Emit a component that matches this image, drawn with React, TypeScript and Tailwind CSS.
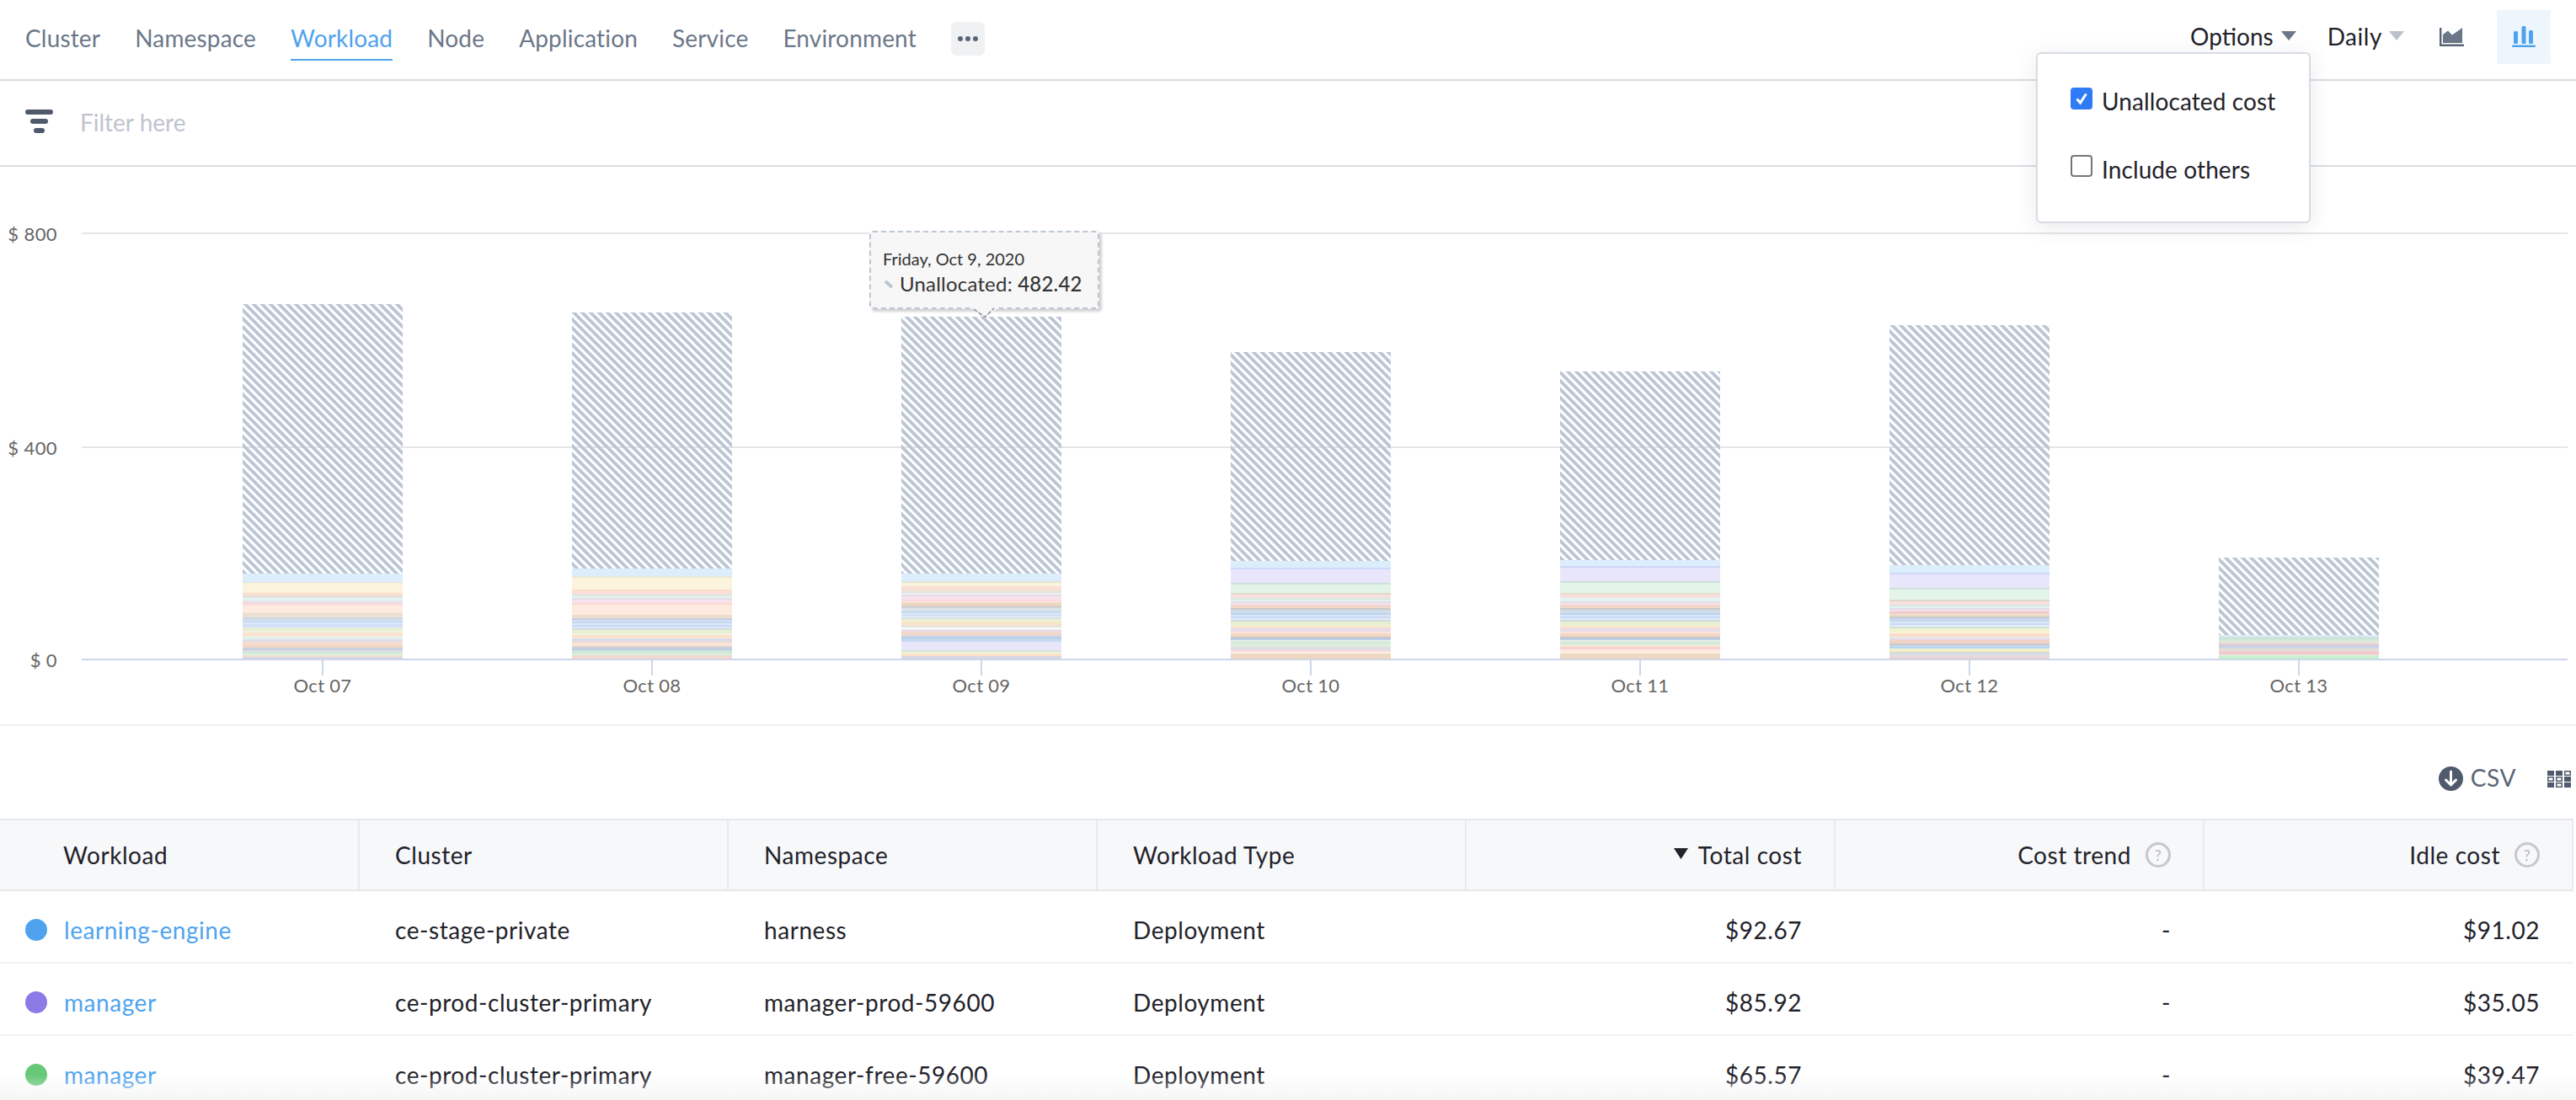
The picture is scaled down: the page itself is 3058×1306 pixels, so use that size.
import React from "react";

type S = [number, string];
const F = "[font-family:Lato,'Noto_Sans',sans-serif]";

const blue = "#dcedfb", lav = "#e8e6fb", grn = "#e3f5e8", cream = "#fcf3dc", peach = "#fdebdf";

const common45: S[] = [[4, "#d0dcea"], [2, "#b9d4f0"], [2, "#dce8f8"], [2, "#c8d8f8"], [2, "#e6ecf4"], [2, "#d0dce0"], [4, "#e6efcf"], [2, "#f2eed0"], [2, "#fae0d4"], [4, "#e8dce8"], [2, "#fbe4dc"], [4, "#f2d8c0"], [2, "#c8c4d0"], [2, "#b8cfe8"], [2, "#e8f0e8"], [2, "#cfe8d8"]];

const bars: { top: number; hatchEnd: number; stripes: S[] }[] = [
  { top: 361, hatchEnd: 681, stripes: [[10, blue], [1, "#dde2e0"], [12, cream], [4, "#f9dfd0"], [2, "#e0e0e0"], [4, "#e2f4f1"], [2, "#e6dce6"], [3, "#fcd8e0"], [9, peach], [2, "#eedcc8"], [4, "#e8e0d4"], [2, "#c9d4e4"], [2, "#d2e0f0"], [2, "#c6d8f0"], [2, "#dce8fc"], [2, "#c8daf6"], [2, "#d8e2f2"], [1, "#dfe4e0"], [3, "#e6efcf"], [2, "#eff0e0"], [3, "#fbe0c8"], [2, "#f7e6dc"], [3, "#dff0ec"], [3, "#dcdde8"], [4, "#f6dccc"], [3, "#efd5c4"], [3, "#c8cfe0"], [2, "#dbdde4"], [2, "#cfe8d8"], [2, "#dceedd"], [2, "#f5dfcc"], [2, "#d4d6e4"]] },
  { top: 371, hatchEnd: 675, stripes: [[9, blue], [2, "#e8e6d8"], [14, cream], [2, "#f9dcc8"], [4, "#f9e0dc"], [2, "#dde8e0"], [2, "#e2f4f1"], [2, "#e4dce8"], [4, "#f8e0ec"], [2, "#fad8d0"], [12, peach], [3, "#eedcc8"], [1, "#e8e0d4"], [2, "#c6cfe0"], [2, "#d4dff0"], [2, "#c8d8ee"], [2, "#dce8fc"], [2, "#c8daf6"], [2, "#dde6f5"], [2, "#d8dde0"], [4, "#e6efcf"], [2, "#f0f2e4"], [3, "#fbe0c8"], [1, "#f7e6dc"], [4, "#dcdde8"], [2, "#f9dccc"], [2, "#f8ece0"], [2, "#f2d8c4"], [2, "#c8d0e2"], [2, "#bccce2"], [4, "#cfe8d8"], [2, "#dceedd"], [4, "#f0d8d0"]] },
  { top: 376, hatchEnd: 681, stripes: [[9, blue], [2, "#dfe5dd"], [4, cream], [6, "#f9e0d4"], [2, "#d8e6dc"], [2, "#f0f0f0"], [2, "#e4dce8"], [4, "#f6e2ec"], [2, "#fcd8e0"], [2, "#f8e4d8"], [4, "#edd6c0"], [2, "#c9c9d0"], [4, "#dfe4ea"], [2, "#b9d8ee"], [2, "#dce8f6"], [2, "#cedcf8"], [2, "#e4e8f4"], [2, "#cfe4d8"], [2, "#f0f0d8"], [4, "#f5e6c8"], [2, "#f9dcc8"], [2, "#d9e6e0"], [2, "#ffffff"], [3, "#e6d8e4"], [4, "#f2d6c8"], [2, "#cfd4e0"], [3, "#b8cfe8"], [3, "#c8d8f0"], [10, lav], [2, "#cfe4d0"], [2, "#eef2d8"], [3, "#f9e2c8"], [3, "#d5d6e6"]] },
  { top: 418, hatchEnd: 666, stripes: [[8, blue], [2, "#cfd8f8"], [16, lav], [2, "#cfe0dc"], [10, grn], [2, "#e0d8c8"], [4, "#f9e0e0"], [2, "#d8e6e0"], [2, "#e2f4f1"], [2, "#e4dce8"], [2, "#f6e2ec"], [4, "#f2d8cc"], [2, "#c9c9c9"], ...common45, [4, "#dceedd"], [4, "#e0dde4"], [2, "#f9dcd8"], [2, "#fdf0e8"], [6, "#eed6c0"]] },
  { top: 441, hatchEnd: 665, stripes: [[7, blue], [2, "#cfd8f8"], [16, lav], [2, "#cfe0dc"], [12, grn], [2, "#e8dccc"], [4, "#f9e0e0"], [4, "#e2f4f1"], [2, "#e4dce8"], [2, "#f6e2ec"], [4, "#f2d8cc"], [2, "#c9c9c9"], ...common45, [2, "#dceedd"], [2, "#f0e8d0"], [3, "#f9cfd4"], [5, peach], [6, "#edd8c4"]] },
  { top: 386, hatchEnd: 671, stripes: [[9, blue], [2, "#cfd8f8"], [16, lav], [2, "#cfe0dc"], [12, grn], [2, "#e0d8c8"], [4, "#f9e0e0"], [2, "#d8e6e0"], [2, "#e2f4f1"], [2, "#e4dce8"], [2, "#f6e2ec"], [2, "#eec8cc"], [4, "#eddcc8"], [2, "#c9c9c9"], [4, "#c8d8ec"], [2, "#dce8f8"], [2, "#c8d8f8"], [2, "#e6ecf4"], [2, "#cfe4d8"], [4, "#f0f2d0"], [2, "#fdf3d0"], [4, "#f9dccc"], [2, "#e8eaea"], [2, "#e4d8e4"], [4, "#f2d2c4"], [2, "#c8c8d0"], [2, "#c8d8ea"], [2, "#b8d8f0"], [2, "#eef2d0"], [2, "#f5ecc0"], [2, "#d0dcd8"], [4, "#e0dde4"], [2, "#eccfd0"]] },
  { top: 662, hatchEnd: 754, stripes: [[2, blue], [4, "#cfe4d8"], [4, "#dde8dc"], [2, "#f5c8c8"], [4, "#c8cfe8"], [4, "#e0dcd8"], [4, "#f4c8c8"], [2, "#dbeedd"], [3, "#c4f0d0"]] },
];
const labels = ["Oct 07", "Oct 08", "Oct 09", "Oct 10", "Oct 11", "Oct 12", "Oct 13"];
const BASE = 782;

function Chart() {
  return (
    <svg width="3058" height="662" viewBox="0 198 3058 662" className="block shrink-0">
      <defs>
        <pattern id="hatch" patternUnits="userSpaceOnUse" width="10" height="10">
          <path d="M0 0L10 10M9 -1L11 1M-1 9L1 11" stroke="#bcc6d4" strokeWidth="4" fill="none" />
        </pattern>
      </defs>
      <rect x="97" y="276" width="2951" height="2" fill="#e6e6e6" />
      <rect x="97" y="530" width="2951" height="2" fill="#e6e6e6" />
      <rect x="97" y="782" width="2951" height="2" fill="#ccd6eb" />
      {[["$ 800", 286], ["$ 400", 540], ["$ 0", 792]].map(([t, y]) => (
        <text key={t as string} x="68" y={y as number} textAnchor="end" fontSize="22" fill="#666666" fontFamily="Lato, sans-serif" letterSpacing="0.4">{t}</text>
      ))}
      {bars.map((b, i) => {
        const x = 288 + i * 391;
        const total = b.stripes.reduce((a, s) => a + s[0], 0);
        const k = (BASE - b.hatchEnd) / total;
        let y = b.hatchEnd;
        return (
          <g key={i}>
            <rect x={x} y={b.top} width="190" height={b.hatchEnd - b.top} fill="url(#hatch)" />
            {b.stripes.map((s, j) => {
              const h = s[0] * k;
              const r = <rect key={j} x={x} y={y} width="190" height={h + 0.3} fill={s[1]} />;
              y += h;
              return r;
            })}
            <rect x={x + 94} y="784" width="2" height="18" fill="#ccd6eb" />
            <text x={x + 95} y="822" textAnchor="middle" fontSize="22" fill="#666666" fontFamily="Lato, sans-serif" letterSpacing="0.3">{labels[i]}</text>
          </g>
        );
      })}
    </svg>
  );
}

function Help() {
  return (
    <span className="ml-[17px] flex h-[30px] w-[30px] items-center justify-center rounded-full border-[3px] border-[#c6c8cc] text-[17px] leading-none text-[#b4b6bb]">?</span>
  );
}

function Th({ children, right, first }: { children: React.ReactNode; right?: boolean; first?: boolean }) {
  return (
    <div className={`flex items-center border-r-2 border-[#e9eaed] bg-[#f7f8fa] ${right ? "justify-end pr-[38px]" : first ? "pl-[75px]" : "pl-[42px]"}`}>
      {children}
    </div>
  );
}

const rows = [
  { dot: "#4fa3ee", name: "learning-engine", cl: "ce-stage-private", ns: "harness", total: "$92.67", idle: "$91.02" },
  { dot: "#8c7be6", name: "manager", cl: "ce-prod-cluster-primary", ns: "manager-prod-59600", total: "$85.92", idle: "$35.05" },
  { dot: "#66c878", name: "manager", cl: "ce-prod-cluster-primary", ns: "manager-free-59600", total: "$65.57", idle: "$39.47" },
];

const Cell = ({ children, right }: { children: React.ReactNode; right?: boolean }) => (
  <div className={`flex h-[86px] items-center border-b-2 border-[#f1f2f4] pt-[8px] ${right ? "justify-end pr-[40px]" : "pl-[42px]"}`}>{children}</div>
);

export default function App() {
  return (
    <div className={`relative flex h-[1306px] w-[3058px] flex-col overflow-hidden bg-white text-[28px] tracking-[0.55px] text-[#22222a] ${F}`}>
      <header className="flex h-[96px] shrink-0 border-b-2 border-[#d8dce0] pl-[30px] pr-[30px]">
        <nav className="flex items-start gap-[41px] tracking-[0.17px] text-[#6b7789]">
          {["Cluster", "Namespace", "Workload", "Node", "Application", "Service", "Environment"].map((t) => (
            <span key={t} className={`mt-[26px] flex h-[46px] items-start leading-[38px] ${t === "Workload" ? "border-b-2 border-[#4fa3ee] text-[#4fa3ee]" : ""}`}>{t}</span>
          ))}
          <span className="mt-[26px] flex h-[40px] w-[40px] items-center justify-center gap-[3px] rounded-[6px] bg-[#f0f1f3]">
            <i className="h-[6px] w-[6px] rounded-full bg-[#5a6577]" />
            <i className="h-[6px] w-[6px] rounded-full bg-[#5a6577]" />
            <i className="h-[6px] w-[6px] rounded-full bg-[#5a6577]" />
          </span>
        </nav>
        <div className="ml-auto flex items-start">
          <span className="mt-[24px] leading-[38px] tracking-normal">Options</span>
          <svg width="18" height="11" className="ml-[9px] mt-[37px]"><path d="M0 0H18L9 11Z" fill="#6b7789" /></svg>
          <span className="ml-[37px] mt-[24px] leading-[38px]">Daily</span>
          <svg width="18" height="11" className="ml-[8px] mt-[37px]"><path d="M0 0H18L9 11Z" fill="#bcc2cc" /></svg>
          <svg width="29" height="22" viewBox="0 0 29 22" className="ml-[42px] mt-[33px]">
            <path d="M1.2 0V20.8H29" stroke="#5a6577" strokeWidth="2.4" fill="none" />
            <path d="M4 18V8L10 3.5L15 8.5L27 0V18Z" fill="#6b7789" />
          </svg>
          <span className="ml-[39px] mt-[12px] flex h-[64px] w-[64px] items-start justify-center bg-[#eef6fd]">
            <svg width="28" height="25" viewBox="0 0 28 25" className="mt-[19px]">
              <rect x="2" y="6" width="5" height="15" rx="1.5" fill="#4fa3ee" />
              <rect x="11.5" y="0" width="5" height="21" rx="1.5" fill="#4fa3ee" />
              <rect x="20" y="5" width="5" height="16" rx="1.5" fill="#4fa3ee" />
              <rect x="0" y="22.5" width="28" height="2.5" rx="1" fill="#4fa3ee" />
            </svg>
          </span>
        </div>
      </header>

      <div className="flex h-[102px] shrink-0 items-center border-b-2 border-[#d8dce0] pl-[30px]">
        <svg width="33" height="28" viewBox="0 0 33 28" className="mt-[-4px]">
          <rect x="0" y="0" width="33" height="6" rx="3" fill="#505a6c" />
          <rect x="6" y="11" width="21" height="6" rx="3" fill="#505a6c" />
          <rect x="10" y="22" width="13" height="6" rx="3" fill="#505a6c" />
        </svg>
        <span className="ml-[32px] mt-[-2px] tracking-normal text-[#c0c3cf]">Filter here</span>
      </div>

      <Chart />
      <div className="h-[2px] shrink-0 bg-[#eef0f2]" />

      <div className="flex h-[110px] shrink-0 items-start justify-end pr-[6px]">
        <svg width="29" height="29" viewBox="0 0 29 29" className="mt-[48px]">
          <circle cx="14.5" cy="14.5" r="14.5" fill="#505a6c" />
          <path d="M14.5 6V22M8.5 16L14.5 22L20.5 16" stroke="#fff" strokeWidth="3" fill="none" strokeLinecap="round" strokeLinejoin="round" />
        </svg>
        <span className="ml-[9px] mt-[42px] leading-[38px] text-[#5a6577]">CSV</span>
        <svg width="28" height="20" viewBox="0 0 28 20" className="ml-[37px] mt-[53px]">
          {[0, 7, 14].map((y, r) =>
            [0, 10, 20].map((x, c) => {
              const outline = (r === 0 && c === 2) || (r === 1 && (c === 0 || c === 1)) || (r === 2 && c === 1);
              return outline ? (
                <rect key={`${r}${c}`} x={x + 0.75} y={y + 0.75} width="6.5" height="4.5" fill="none" stroke="#505a6c" strokeWidth="1.5" />
              ) : (
                <rect key={`${r}${c}`} x={x} y={y} width="8" height="6" fill="#505a6c" />
              );
            })
          )}
        </svg>
      </div>

      <div className="w-[3055px] shrink-0">
        <div className="grid h-[86px] grid-cols-[427px_repeat(6,438px)] border-y-2 border-[#e6e7ea]">
          <Th first>Workload</Th>
          <Th>Cluster</Th>
          <Th>Namespace</Th>
          <Th>Workload Type</Th>
          <Th right>
            <svg width="17" height="13" className="mb-[4px] mr-[12px]"><path d="M0 0H17L8.5 13Z" fill="#22222a" /></svg>
            Total cost
          </Th>
          <Th right>Cost trend<Help /></Th>
          <Th right>Idle cost<Help /></Th>
        </div>
        {rows.map((r, i) => (
          <div key={i} className="grid grid-cols-[427px_repeat(6,438px)]">
            <div className="flex h-[86px] items-center border-b-2 border-[#f1f2f4] pl-[30px] pt-[8px]">
              <i className="h-[26px] w-[26px] rounded-full" style={{ backgroundColor: r.dot }} />
              <span className="ml-[20px] text-[#4fa3ee]">{r.name}</span>
            </div>
            <Cell>{r.cl}</Cell>
            <Cell>{r.ns}</Cell>
            <Cell>Deployment</Cell>
            <Cell right>{r.total}</Cell>
            <Cell right>-</Cell>
            <Cell right>{r.idle}</Cell>
          </div>
        ))}
      </div>

      {/* options popover */}
      <div className="absolute left-[2417px] top-[62px] h-[203px] w-[326px] rounded-[6px] border-2 border-[#d8dce3] bg-white tracking-[0.1px] shadow-[0_4px_24px_rgba(90,100,120,0.14)]">
        <div className="ml-[39px] mt-[40px] flex h-[26px] items-center">
          <span className="flex h-[26px] w-[26px] items-center justify-center rounded-[4px] bg-[#2f7bf5]">
            <svg width="18" height="18" viewBox="0 0 18 18"><path d="M3.5 9.5L7.5 14L14.5 3.5" stroke="#fff" strokeWidth="3" fill="none" /></svg>
          </span>
          <span className="ml-[11px] mt-[6px]">Unallocated cost</span>
        </div>
        <div className="ml-[39px] mt-[54px] flex h-[26px] items-center">
          <span className="h-[26px] w-[26px] rounded-[4px] border-2 border-[#767676] bg-white" />
          <span className="ml-[11px] mt-[8px]">Include others</span>
        </div>
      </div>

      {/* chart tooltip */}
      <div className="absolute left-[1032px] top-[274px] h-[93px] w-[273px] rounded-[4px] border-2 border-dashed border-[#bcc6d4] bg-[#f7f7f7] pl-[14px] pt-[16px] tracking-normal shadow-[3px_3px_3px_rgba(0,0,0,0.18)]">
        <div className="text-[20px] leading-[30px] text-[#333333]">Friday, Oct 9, 2020</div>
        <div className="flex items-center text-[24px] leading-[30px] tracking-[0.2px] text-[#333333]">
          <svg width="10" height="10" className="ml-[2px] mr-[8px]"><path d="M1 2L9 9" stroke="#bdc7d5" strokeWidth="4" /></svg>
          Unallocated:&nbsp;<span className="font-medium">482.42</span>
        </div>
        <svg width="40" height="13" className="absolute left-[116px] top-[89px]">
          <path d="M2 0L19 11.5L36 0Z" fill="#f7f7f7" />
          <path d="M6 2L19 11.5L30 1" fill="none" stroke="#9aa4b4" strokeWidth="2" strokeDasharray="5 2" />
        </svg>
      </div>

      {/* bottom fade */}
      <div className="pointer-events-none absolute inset-x-0 bottom-0 h-[30px] bg-gradient-to-b from-transparent to-[#f1f2f3]/70" />
    </div>
  );
}
